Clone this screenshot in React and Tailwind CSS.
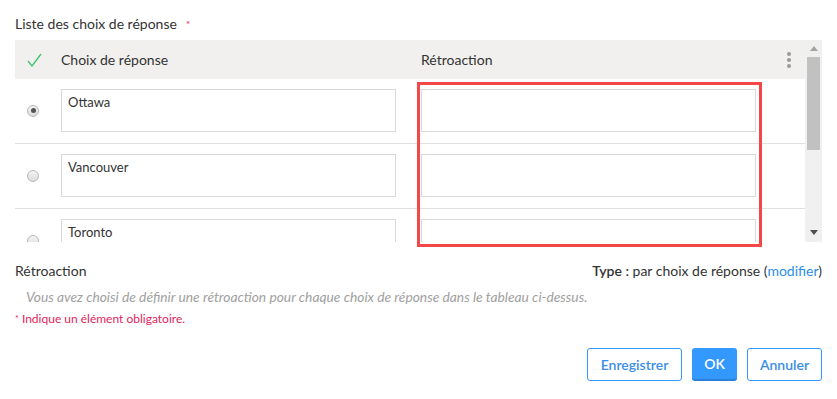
import React from "react";

const rows = [
  { label: "Ottawa", checked: true },
  { label: "Vancouver", checked: false },
  { label: "Toronto", checked: false },
];

function Radio({ checked }) {
  return (
    <span className="flex h-[12px] w-[12px] items-center justify-center rounded-full border border-[#b8b8b8] bg-gradient-to-b from-[#f4f4f4] to-[#dcdcdc]">
      {checked && <span className="h-[5px] w-[5px] rounded-full bg-[#555]" />}
    </span>
  );
}

function ChoiceRow({ row }) {
  return (
    <div className="flex h-[65px] shrink-0 border-b border-[#e0e0e0] pt-[10px]">
      <div className="flex h-[43px] w-[46px] items-center pl-[12px]">
        <Radio checked={row.checked} />
      </div>
      <div className="h-[43px] w-[335px] border border-[#d9d9d9] px-[6px] pt-[3px] text-[13px] text-[#333]">
        {row.label}
      </div>
      <div className="w-[25px]" />
      <div className="h-[43px] w-[335px] border border-[#d9d9d9]" />
    </div>
  );
}

export default function App() {
  return (
    <div
      className="relative h-[399px] w-[837px] bg-white px-[15px] pt-[15px] text-[#333]"
      style={{ fontFamily: "Lato, 'Noto Sans', sans-serif" }}
    >
      <div className="flex h-[18px] items-center text-[14px] leading-[18px]">
        Liste des choix de réponse
        <span className="ml-[9px] text-[10px] text-[#e0245e]">*</span>
      </div>

      <div className="mt-[7px] flex h-[202px]">
        <div className="flex flex-1 flex-col overflow-hidden">
          <div className="flex h-[39px] shrink-0 items-center bg-[#f1f0ef] text-[14px]">
            <div className="flex w-[46px] pl-[12px]">
              <svg width="15" height="14" viewBox="0 0 15 14" fill="none">
                <path d="M1 8 L5 13 L14 1" stroke="#3ec46d" strokeWidth="1.3" />
              </svg>
            </div>
            <div className="w-[360px]">Choix de réponse</div>
            <div className="flex-1">Rétroaction</div>
            <div className="flex w-[30px] flex-col items-center gap-[2px] pr-[2px]">
              <span className="h-[4px] w-[4px] rounded-full bg-[#999]" />
              <span className="h-[4px] w-[4px] rounded-full bg-[#999]" />
              <span className="h-[4px] w-[4px] rounded-full bg-[#999]" />
            </div>
          </div>
          {rows.map((r) => (
            <ChoiceRow key={r.label} row={r} />
          ))}
        </div>

        <div className="flex w-[17px] flex-col items-center bg-[#f0f0f0]">
          <div className="flex h-[17px] items-center justify-center">
            <svg width="8" height="5" viewBox="0 0 8 5">
              <path d="M0 5 L4 0 L8 5 Z" fill="#a3a3a3" />
            </svg>
          </div>
          <div className="h-[93px] w-[13px] bg-[#c1c1c1]" />
          <div className="flex-1" />
          <div className="flex h-[17px] items-center justify-center pb-[2px]">
            <svg width="8" height="5" viewBox="0 0 8 5">
              <path d="M0 0 L8 0 L4 5 Z" fill="#505050" />
            </svg>
          </div>
        </div>
      </div>

      <div className="mt-[19px] flex h-[18px] items-center justify-between text-[14px]">
        <span>Rétroaction</span>
        <span>
          <span className="font-semibold">Type :</span> par choix de réponse (
          <span className="text-[#2a8ee8]">modifier</span>)
        </span>
      </div>

      <div className="mt-[9px] pl-[11px] text-[13.8px] italic leading-[18px] text-[#a0a0a0]">
        Vous avez choisi de définir une rétroaction pour chaque choix de réponse dans le tableau ci-dessus.
      </div>

      <div className="mt-[5px] text-[12px] leading-[16px] text-[#e0245e]">
        <span className="text-[9px] align-top">*</span> Indique un élément obligatoire.
      </div>

      <div className="mt-[21px] flex justify-end gap-[10px] text-[14px] font-semibold">
        <button className="h-[33px] w-[95px] rounded-[3px] border border-[#3399ff] bg-white text-[#3a8ee6]">
          Enregistrer
        </button>
        <button className="h-[33px] w-[45px] rounded-[3px] border-b-2 border-[#2a7fd8] bg-[#3399ff] text-white">
          OK
        </button>
        <button className="h-[33px] w-[75px] rounded-[3px] border border-[#3399ff] bg-white text-[#3a8ee6]">
          Annuler
        </button>
      </div>

      <div className="pointer-events-none absolute left-[417px] top-[82px] h-[165px] w-[345px] border-[3px] border-[#f44848]" />
    </div>
  );
}
